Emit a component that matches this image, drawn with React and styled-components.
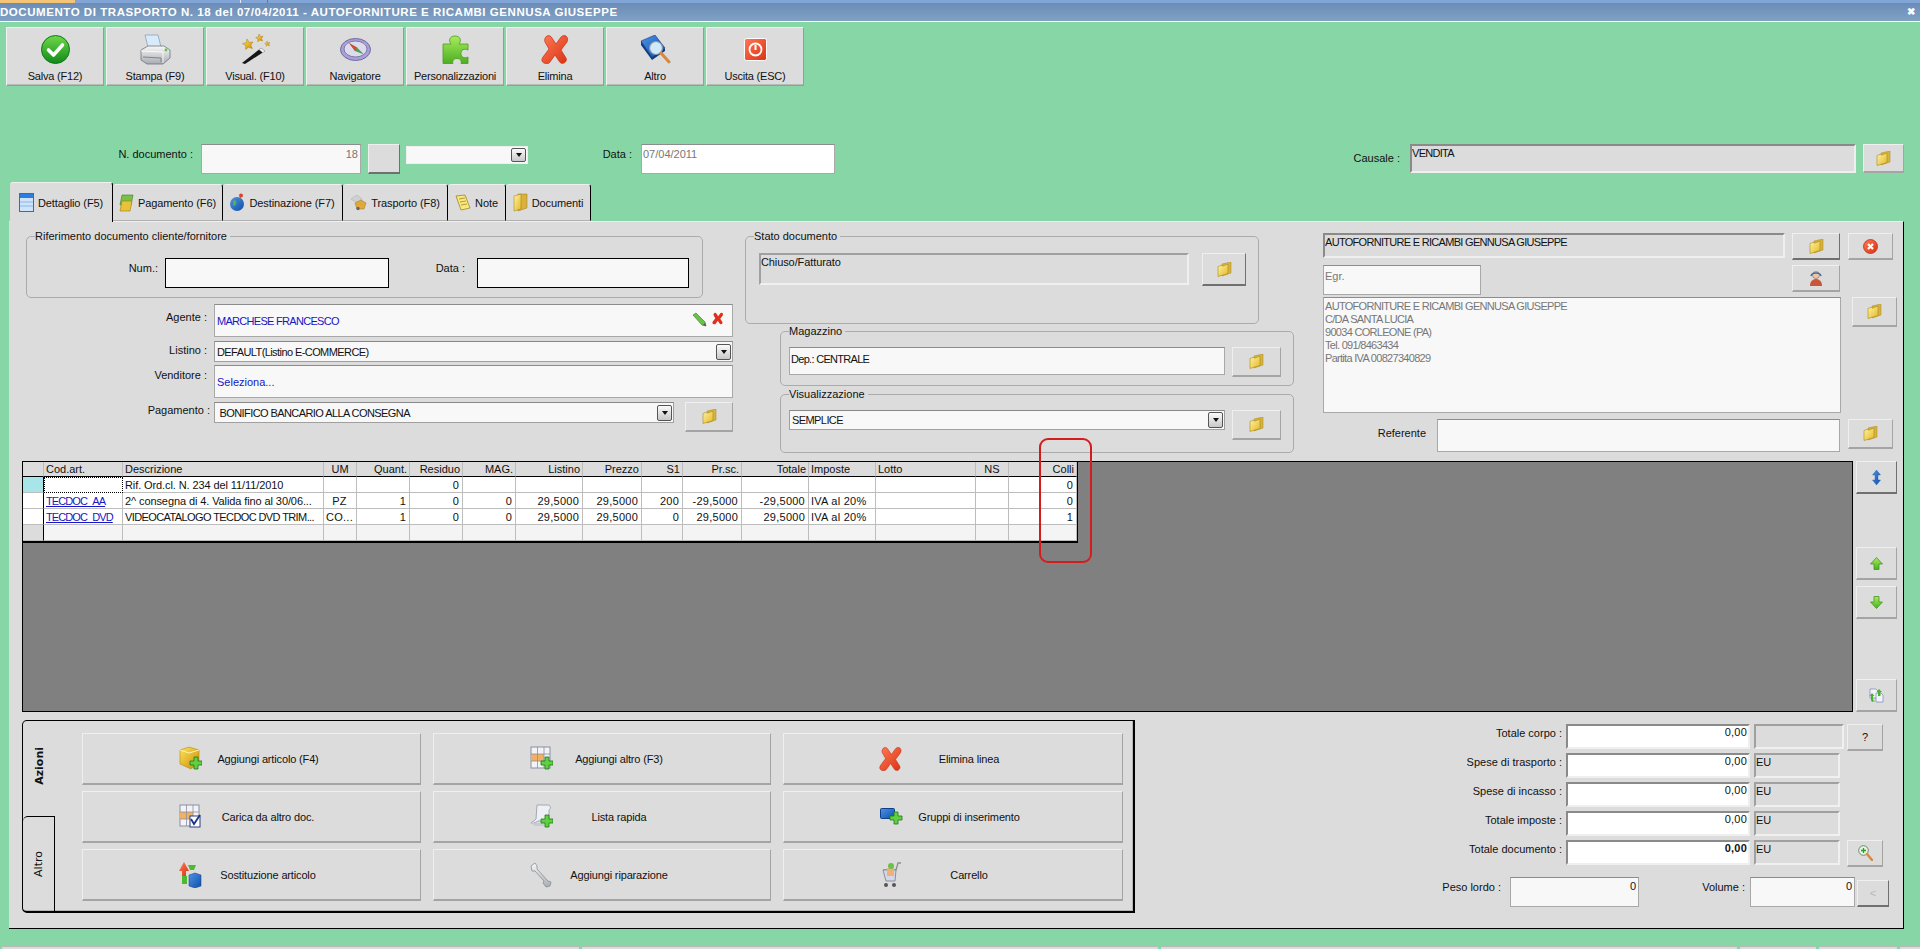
import React from "react"
import styled, { createGlobalStyle } from "styled-components"

const GlobalStyle = createGlobalStyle`
  html, body { margin: 0; padding: 0; background: #87d7a6; }
  * { box-sizing: border-box; }
  body { font-family: "Liberation Sans", Arial, sans-serif; font-size: 11px; color: #111; }
`

/* ---------- icons ---------- */
const Defs = () => (
  <HiddenSvg aria-hidden="true">
    <defs>
      <linearGradient id="gGreen" x1="0" y1="0" x2="0" y2="1"><stop offset="0" stopColor="#6fd84a" /><stop offset="1" stopColor="#0f8a18" /></linearGradient>
      <linearGradient id="gLime" x1="0" y1="0" x2="0" y2="1"><stop offset="0" stopColor="#a6ec5c" /><stop offset="1" stopColor="#4dae23" /></linearGradient>
      <linearGradient id="gRed" x1="0" y1="0" x2="1" y2="1"><stop offset="0" stopColor="#ff7a55" /><stop offset="1" stopColor="#d93213" /></linearGradient>
      <linearGradient id="gFolder" x1="0" y1="0" x2="1" y2="1"><stop offset="0" stopColor="#fff29c" /><stop offset="1" stopColor="#e2b92c" /></linearGradient>
      <linearGradient id="gBlue" x1="0" y1="0" x2="1" y2="1"><stop offset="0" stopColor="#4d93e6" /><stop offset="1" stopColor="#0f4fa8" /></linearGradient>
      <linearGradient id="gGold" x1="0" y1="0" x2="1" y2="1"><stop offset="0" stopColor="#ffe25a" /><stop offset="1" stopColor="#c88c08" /></linearGradient>
      <linearGradient id="gGray" x1="0" y1="0" x2="0" y2="1"><stop offset="0" stopColor="#f7f7f7" /><stop offset="1" stopColor="#a9adb2" /></linearGradient>
    </defs>
  </HiddenSvg>
)

const Check = () => (
  <svg width="29" height="29" viewBox="0 0 29 29">
    <circle cx="14.5" cy="14.5" r="14" fill="url(#gGreen)" stroke="#0d7a16" />
    <path d="M7.5 15l5 5 9-10" fill="none" stroke="#fff" strokeWidth="3.6" strokeLinecap="round" strokeLinejoin="round" />
  </svg>
)
const Printer = () => (
  <svg width="31" height="31" viewBox="0 0 31 31">
    <path d="M5 1l13 0 3 12-13 0z" fill="#d8ebfb" stroke="#7f9ab5" strokeWidth=".7" />
    <path d="M1 16l7-4h16l6 4v8l-7 6H7l-6-4z" fill="url(#gGray)" stroke="#6f7478" strokeWidth=".8" />
    <path d="M1 17l22 1v11" fill="none" stroke="#fff" strokeWidth=".8" />
    <path d="M3 23l18 1v4" fill="none" stroke="#6f7478" strokeWidth=".8" />
    <circle cx="26" cy="16" r="1.4" fill="#5ec04a" />
  </svg>
)
const Wand = () => (
  <svg width="31" height="31" viewBox="0 0 31 31">
    <path d="M2 29l19-15 4 3-20 13z" fill="#151515" />
    <path d="M19 15.500l2-1.600 4 3-2.200 1.800z" fill="#f2f2f2" stroke="#999" strokeWidth=".4" />
    <path d="M7 5l2.200 3.400 3.800-.4-2.200 3 1.500 3.600-3.700-1.400-3 2.300.2-3.800L2.500 9.600l3.800-1z" fill="url(#gGold)" stroke="#b07d0a" strokeWidth=".5" />
    <path d="M19 0l1.300 2.400 2.700-.2-1.500 2.200 1 2.600-2.600-1-2.100 1.700.2-2.700-2.300-1.400 2.600-.7z" fill="url(#gGold)" stroke="#b07d0a" strokeWidth=".5" />
    <path d="M27 7l.9 1.700 1.900-.2-1 1.500.7 1.800-1.800-.7-1.500 1.200.1-1.900-1.600-1 1.900-.5z" fill="url(#gGold)" stroke="#b07d0a" strokeWidth=".4" />
  </svg>
)
const Compass = () => (
  <svg width="31" height="23" viewBox="0 0 31 23">
    <ellipse cx="15.500" cy="11.500" rx="15" ry="11" fill="#a7a1d6" stroke="#6f6aa0" />
    <ellipse cx="15.500" cy="11" rx="11.500" ry="8" fill="#dcdcec" stroke="#7d78a8" />
    <path d="M9 5l8 4.500 7 7-9-3.500z" fill="#4f9e55" />
    <path d="M9 5l8 4.500-2 3.500z" fill="#d9472f" />
  </svg>
)
const Puzzle = () => (
  <svg width="27" height="29" viewBox="0 0 27 29">
    <path d="M1 9h8c-3-4-1-8 4-8s7 4 4 8h9v6c-4-2-7 0-7 3.500s3 5.500 7 3.500v6.500h-7c1-3-1-5-4-5s-5 2-4 5H1z" fill="url(#gLime)" stroke="#4e9a1e" strokeWidth=".8" />
  </svg>
)
const BigCross = ({ size = 29 }) => (
  <svg width={size} height={size} viewBox="0 0 29 29">
    <path d="M6 1c2-1 4 0 5 2l4 6 5-7c1-1 3-2 5-1 2 2 2 4 1 6l-6 8 5 8c1 2 0 4-2 5s-4 0-5-2l-4-6-5 7c-1 2-4 2-6 1s-3-3-1-6l6-8-4-7C3 5 4 2 6 1z" fill="url(#gRed)" stroke="#c82d12" strokeWidth=".7" />
  </svg>
)
const Book = () => (
  <svg width="31" height="29" viewBox="0 0 31 29">
    <path d="M1 6l14-6 10 13-13 9z" fill="url(#gBlue)" stroke="#0d3f8a" strokeWidth=".6" />
    <path d="M1 6l11 16 13-9v3l-13 9L1 10z" fill="#0c3d85" />
    <circle cx="16" cy="13" r="6.500" fill="#cfe9fb" stroke="#8795a3" strokeWidth="1.200" />
    <path d="M21 18l8 9" stroke="#d9883e" strokeWidth="3" strokeLinecap="round" />
  </svg>
)
const Power = () => (
  <svg width="23" height="23" viewBox="0 0 23 23">
    <rect x=".5" y=".5" width="22" height="22" rx="2" fill="url(#gRed)" stroke="#fff" />
    <circle cx="11.500" cy="11.500" r="6" fill="none" stroke="#fff" strokeWidth="1.800" />
    <path d="M11.500 7v5" stroke="#fff" strokeWidth="2" />
  </svg>
)
const Folder = () => (
  <svg width="15" height="15" viewBox="0 0 15 15">
    <path d="M5 2l9-2v11l-9 3z" fill="#d7b23c" stroke="#a88a20" strokeWidth=".5" />
    <path d="M1 4.500l3.500-1.300 1 1L11 2v9.500L1 14.500z" fill="url(#gFolder)" stroke="#a88a20" strokeWidth=".6" />
  </svg>
)
const CalcTab = () => (
  <svg width="15" height="19" viewBox="0 0 15 19">
    <rect x=".5" y=".5" width="14" height="18" fill="#cfe4fa" stroke="#2b6fc0" />
    <rect x="1" y="1" width="13" height="4" fill="#2b7de0" />
    <path d="M1 9h13M1 13h13" stroke="#8bb6e6" />
  </svg>
)
const MoneyTab = () => (
  <svg width="15" height="18" viewBox="0 0 15 18">
    <path d="M3 1h11l-2 10H1z" fill="#79c043" stroke="#3c7d1c" strokeWidth=".6" />
    <path d="M3 7h10l-2 10H1z" fill="#e9c23a" stroke="#9c7a14" strokeWidth=".6" />
  </svg>
)
const GlobeTab = () => (
  <svg width="15" height="19" viewBox="0 0 15 19">
    <circle cx="7" cy="11" r="7" fill="url(#gBlue)" />
    <path d="M3 8c3-2 4 1 3 3s-2 3-3 1z" fill="#54b04a" />
    <circle cx="11" cy="2.500" r="2" fill="#e0402a" />
    <path d="M10.500 4l-1 4" stroke="#777" />
  </svg>
)
const TruckTab = () => (
  <svg width="17" height="16" viewBox="0 0 17 16">
    <path d="M1 4l6-4 5 4-3 5z" fill="#d0d0d0" stroke="#aaa" strokeWidth=".5" />
    <path d="M5 8l6-3 5 3-2 6H7z" fill="#e3a83c" stroke="#9a7420" strokeWidth=".5" />
    <circle cx="8" cy="13.500" r="1.700" fill="#666" />
  </svg>
)
const NoteTab = () => (
  <svg width="16" height="17" viewBox="0 0 16 17">
    <path d="M1 2l9-1 5 13-9 2z" fill="#fbe77a" stroke="#8f7a1c" strokeWidth=".7" />
    <path d="M4 5l6-1M5 8l6-1M6 11l6-1" stroke="#8f7a1c" strokeWidth=".7" />
  </svg>
)
const DocsTab = () => (
  <svg width="15" height="19" viewBox="0 0 15 19">
    <path d="M5 1h9v14l-9 3z" fill="#d9b13c" stroke="#9a7a18" strokeWidth=".5" />
    <path d="M1 3l7-2v15l-7 2z" fill="url(#gFolder)" stroke="#9a7a18" strokeWidth=".5" />
  </svg>
)
const Pencil = () => (
  <svg width="16" height="15" viewBox="0 0 16 15">
    <path d="M1 3l3-2 9 9 1 4-4-1z" fill="#6cc14b" stroke="#3f8a24" strokeWidth=".7" />
    <path d="M11 13l3 1-1-3z" fill="#555" />
  </svg>
)
const SmallCross = () => (
  <svg width="12" height="13" viewBox="0 0 29 29">
    <path d="M6 1c2-1 4 0 5 2l4 6 5-7c1-1 3-2 5-1 2 2 2 4 1 6l-6 8 5 8c1 2 0 4-2 5s-4 0-5-2l-4-6-5 7c-1 2-4 2-6 1s-3-3-1-6l6-8-4-7C3 5 4 2 6 1z" fill="#e0301c" />
  </svg>
)
const RedCircle = () => (
  <svg width="15" height="15" viewBox="0 0 15 15">
    <circle cx="7.500" cy="7.500" r="7" fill="url(#gRed)" stroke="#b1220c" strokeWidth=".7" />
    <path d="M5 5l5 5M10 5l-5 5" stroke="#fff" strokeWidth="2.200" />
  </svg>
)
const Person = () => (
  <svg width="14" height="15" viewBox="0 0 14 15">
    <circle cx="7" cy="4" r="3.500" fill="#f2c7a0" stroke="#8c6a4a" strokeWidth=".6" />
    <path d="M2 5c1-4 9-4 10 0" fill="none" stroke="#3a6fb5" strokeWidth="1.400" />
    <path d="M1 15c0-5 3-7 6-7s6 2 6 7z" fill="#c8563a" />
  </svg>
)
const BlueUpDown = () => (
  <svg width="11" height="15" viewBox="0 0 11 15">
    <path d="M5.500 0l4 5H7v5h2.500l-4 5-4-5H4V5H1.500z" fill="url(#gBlue)" stroke="#1a5aa8" strokeWidth=".4" />
  </svg>
)
const ArrowUp = () => (
  <svg width="13" height="13" viewBox="0 0 13 13">
    <path d="M6.500.5L12.500 7H9v5.500H4V7H.5z" fill="url(#gLime)" stroke="#3c8a1a" strokeWidth=".7" />
  </svg>
)
const ArrowDown = () => (
  <svg width="13" height="13" viewBox="0 0 13 13">
    <path d="M4 .5h5V6h3.500L6.500 12.500.5 6H4z" fill="url(#gLime)" stroke="#3c8a1a" strokeWidth=".7" />
  </svg>
)
const Sync = () => (
  <svg width="15" height="15" viewBox="0 0 15 15">
    <path d="M1 1h6l2 2v7H1z" fill="#f2f4fa" stroke="#7285b3" strokeWidth=".7" />
    <path d="M7 5h5l2 2v7H7z" fill="#f2f4fa" stroke="#7285b3" strokeWidth=".7" />
    <path d="M3 5l2.500 3H4v4l2 1-3 1-1-2V8H.5z" fill="#46b52c" />
    <path d="M10 1l3 3h-1.500v4H9V4H7.500z" fill="#46b52c" />
  </svg>
)
const ZoomPlus = () => (
  <svg width="15" height="16" viewBox="0 0 15 16">
    <circle cx="5.500" cy="5.500" r="4.800" fill="#e6f5e2" stroke="#6a8a72" />
    <path d="M3 5.500h5M5.500 3v5" stroke="#2f9a2a" strokeWidth="1.300" />
    <path d="M9 9l5 6" stroke="#d9883e" strokeWidth="2.400" strokeLinecap="round" />
  </svg>
)
const PlusBadge = () => (
  <path d="M15 11h4v4h4v4h-4v4h-4v-4h-4v-4h4z" fill="#5fd040" stroke="#1d7a1a" strokeWidth=".8" />
)
const BoxPlus = () => (
  <svg width="23" height="25" viewBox="0 0 23 25">
    <path d="M1 4l9-3 10 3v13l-8 6-11-5z" fill="url(#gGold)" stroke="#a87a08" strokeWidth=".5" />
    <path d="M1 4l9 3 10-3" fill="none" stroke="#fff2a8" />
    <PlusBadge />
  </svg>
)
const GridCells = () => (
  <g>
    <rect x="1" y="1" width="19" height="21" fill="#f2f3f8" stroke="#8a8fa0" />
    <rect x="1" y="8" width="13" height="7" fill="#f2b060" />
    <path d="M1 8h19M1 15h19M7.500 1v21M14 1v21" stroke="#8a8fa0" strokeWidth=".8" />
  </g>
)
const TablePlus = () => (
  <svg width="23" height="25" viewBox="0 0 23 25"><GridCells /><PlusBadge /></svg>
)
const TableCheck = () => (
  <svg width="23" height="25" viewBox="0 0 23 25">
    <GridCells />
    <rect x="11" y="12" width="10" height="11" fill="#fff" stroke="#2c3e80" />
    <path d="M12 15l3 5 6-9" fill="none" stroke="#17368a" strokeWidth="1.800" />
  </svg>
)
const ScrollPlus = () => (
  <svg width="23" height="25" viewBox="0 0 23 25">
    <path d="M7 1h11c3 0 3 4 1 5v11H8c-3 2-7 3-7 2s4-2 5-4z" fill="#eef0f6" stroke="#a3a8b8" />
    <path d="M1 19h12l2 3H5z" fill="#c7cad6" />
    <PlusBadge />
  </svg>
)
const Swap = () => (
  <svg width="23" height="26" viewBox="0 0 23 26">
    <path d="M5 0l5 9H7v5H3V9H0z" fill="url(#gRed)" />
    <path d="M9 3h8l-2 5H11z" fill="#4dbb30" />
    <path d="M3 14h5v8H3z" fill="#4dbb30" />
    <path d="M10 13l6-2 6 2v11l-6 2-6-2z" fill="url(#gBlue)" stroke="#0d3f8a" strokeWidth=".5" />
  </svg>
)
const Wrench = () => (
  <svg width="23" height="26" viewBox="0 0 23 26">
    <path d="M1 4l4-3 2 3v3l11 12 3 1-1 4-4 1-3-4 1-2L5 9H2z" fill="url(#gGray)" stroke="#7f8388" strokeWidth=".7" />
  </svg>
)
const GroupPlus = () => (
  <svg width="23" height="17" viewBox="0 0 23 17">
    <rect x=".5" y=".5" width="14" height="10" rx="1" fill="url(#gBlue)" stroke="#0d3f8a" />
    <g transform="translate(-1 -7)"><PlusBadge /></g>
  </svg>
)
const Cart = () => (
  <svg width="21" height="26" viewBox="0 0 21 26">
    <path d="M2 8h13l2-7h3" fill="none" stroke="#8a8f96" strokeWidth="1.300" />
    <path d="M2 8h13l-1 11H5z" fill="#d3d7ea" stroke="#8a8f96" />
    <rect x="6" y="6" width="7" height="8" fill="#f0b078" />
    <circle cx="10" cy="4" r="3" fill="#6cc14b" />
    <circle cx="5" cy="23" r="2" fill="#555" />
    <circle cx="13" cy="23" r="2" fill="#555" />
  </svg>
)

/* ---------- data ---------- */
const toolbar = [
  { label: "Salva (F12)", icon: <Check /> },
  { label: "Stampa (F9)", icon: <Printer /> },
  { label: "Visual. (F10)", icon: <Wand /> },
  { label: "Navigatore", icon: <Compass /> },
  { label: "Personalizzazioni", icon: <Puzzle /> },
  { label: "Elimina", icon: <BigCross /> },
  { label: "Altro", icon: <Book /> },
  { label: "Uscita (ESC)", icon: <Power /> },
]

const tabs = [
  { label: "Dettaglio (F5)", icon: <CalcTab />, w: 103, active: true },
  { label: "Pagamento (F6)", icon: <MoneyTab />, w: 110 },
  { label: "Destinazione (F7)", icon: <GlobeTab />, w: 120 },
  { label: "Trasporto (F8)", icon: <TruckTab />, w: 105 },
  { label: "Note", icon: <NoteTab />, w: 58 },
  { label: "Documenti", icon: <DocsTab />, w: 85 },
]

const columns = [
  { w: 21 }, { w: 79, t: "Cod.art." }, { w: 201, t: "Descrizione" }, { w: 33, t: "UM", c: true },
  { w: 53, t: "Quant.", r: true }, { w: 53, t: "Residuo", r: true }, { w: 53, t: "MAG.", r: true },
  { w: 67, t: "Listino", r: true }, { w: 59, t: "Prezzo", r: true }, { w: 41, t: "S1", r: true },
  { w: 59, t: "Pr.sc.", r: true }, { w: 67, t: "Totale", r: true }, { w: 67, t: "Imposte" },
  { w: 100, t: "Lotto" }, { w: 33, t: "NS", c: true }, { w: 68, t: "Colli", r: true },
]

const rows = [
  ["", "Rif. Ord.cl. N. 234 del 11/11/2010", "", "", "0", "", "", "", "", "", "", "", "", "", "0"],
  ["TECDOC_AA", "2^ consegna di 4. Valida fino al 30/06...", "PZ", "1", "0", "0", "29,5000", "29,5000", "200", "-29,5000", "-29,5000", "IVA al 20%", "", "", "0"],
  ["TECDOC_DVD", "VIDEOCATALOGO TECDOC DVD TRIM...", "CO...", "1", "0", "0", "29,5000", "29,5000", "0", "29,5000", "29,5000", "IVA al 20%", "", "", "1"],
  ["", "", "", "", "", "", "", "", "", "", "", "", "", "", ""],
]

const actions = [
  { label: "Aggiungi articolo (F4)", icon: <BoxPlus /> },
  { label: "Aggiungi altro (F3)", icon: <TablePlus /> },
  { label: "Elimina linea", icon: <BigCross size={24} /> },
  { label: "Carica da altro doc.", icon: <TableCheck /> },
  { label: "Lista rapida", icon: <ScrollPlus /> },
  { label: "Gruppi di inserimento", icon: <GroupPlus /> },
  { label: "Sostituzione articolo", icon: <Swap /> },
  { label: "Aggiungi riparazione", icon: <Wrench /> },
  { label: "Carrello", icon: <Cart /> },
]

const totals = [
  { label: "Totale corpo :", unit: "", tail: "?" },
  { label: "Spese di trasporto :", unit: "EU" },
  { label: "Spese di incasso :", unit: "EU" },
  { label: "Totale imposte :", unit: "EU" },
  { label: "Totale documento :", unit: "EU", strong: true, tail: "zoom" },
]

const address = ["AUTOFORNITURE E RICAMBI GENNUSA GIUSEPPE", "C/DA SANTA LUCIA", "90034 CORLEONE (PA)", "Tel. 091/8463434", "Partita IVA 00827340829"]

/* ---------- page ---------- */
export default function App() {
  return (
    <Screen>
      <GlobalStyle />
      <Defs />
      <TopStrip><OrangeTab /><StripTab /></TopStrip>
      <TitleBar>
        <span>DOCUMENTO DI TRASPORTO N. 18 del 07/04/2011 - AUTOFORNITURE E RICAMBI GENNUSA GIUSEPPE</span>
        <CloseBox>✖</CloseBox>
      </TitleBar>

      <Toolbar>
        {toolbar.map(b => (
          <ToolButton key={b.label}>
            <ToolIcon>{b.icon}</ToolIcon>
            <span>{b.label}</span>
          </ToolButton>
        ))}
      </Toolbar>

      <DocRow>
        <DocLabel $w={74}>N. documento :</DocLabel>
        <Input $w={160} $h={30} $ml={8} $right $muted $pt={3}>18</Input>
        <Raised $w={32} $h={30} $ml={7} $deep />
        <Select $w={122} $ml={6} $plain $tall={18} />
        <DocLabel $w={30} $ml={74}>Data :</DocLabel>
        <Input $w={194} $h={30} $ml={9} $muted $white $pt={3}>07/04/2011</Input>
        <DocLabel $w={45} $ml={520} $drop>Causale :</DocLabel>
        <Sunken $w={446} $h={29} $ml={10} $tight>VENDITA</Sunken>
        <Raised $w={41} $h={29} $ml={7}><Folder /></Raised>
      </DocRow>

      <TabStrip>
        {tabs.map(t => (
          <Tab key={t.label} $w={t.w} $active={t.active}>
            {t.icon}
            <span>{t.label}</span>
          </Tab>
        ))}
      </TabStrip>

      <Panel>
        <TopZone>
          <LeftColumn>
            <Group $h={68}>
              <legend>Riferimento documento cliente/fornitore</legend>
              <RefRow>
                <DocLabel $w={32} $ml={91}>Num.:</DocLabel>
                <BlackInput $w={224} $ml={7} />
                <DocLabel $w={30} $ml={46}>Data :</DocLabel>
                <BlackInput $w={212} $ml={12} />
              </RefRow>
            </Group>
            <FormRow $mt={6}>
              <FormLabel $top={7}>Agente :</FormLabel>
              <LinkInput $h={33} $pad={10}>
                <span>MARCHESE FRANCESCO</span>
                <RowIcons><Pencil /><SmallCross /></RowIcons>
              </LinkInput>
            </FormRow>
            <FormRow $mt={4}>
              <FormLabel $top={3}>Listino :</FormLabel>
              <Select $tall={21} $tight>DEFAULT(Listino E-COMMERCE)</Select>
            </FormRow>
            <FormRow $mt={3}>
              <FormLabel $top={4}>Venditore :</FormLabel>
              <LinkInput $h={33} $pad={10} $plainText>Seleziona...</LinkInput>
            </FormRow>
            <FormRow $mt={4}>
              <FormLabel $top={2} $shift={3}>Pagamento :</FormLabel>
              <PayCell>
                <Select $w={460} $tall={21} $tight>&nbsp;BONIFICO BANCARIO ALLA CONSEGNA</Select>
                <Raised $w={48} $h={30} $ml={11}><Folder /></Raised>
              </PayCell>
            </FormRow>
          </LeftColumn>

          <MiddleColumn>
            <Group $h={94} $w={514}>
              <legend>Stato documento</legend>
              <GroupRow $ml={5} $mt={11}>
                <Sunken $w={430} $h={32} $soft>Chiuso/Fatturato</Sunken>
                <Raised $w={44} $h={33} $ml={13} $deep><Folder /></Raised>
              </GroupRow>
            </Group>
            <Group $h={61} $w={514} $offset={35} $mt={1}>
              <legend>Magazzino</legend>
              <GroupRow $ml={0} $mt={10}>
                <Input $w={436} $h={28} $pt={5} $tight>Dep.: CENTRALE</Input>
                <Raised $w={49} $h={30} $ml={7}><Folder /></Raised>
              </GroupRow>
            </Group>
            <Group $h={65} $w={514} $offset={35} $mt={2}>
              <legend>Visualizzazione</legend>
              <GroupRow $ml={0} $mt={10}>
                <Select $w={436} $tall={20} $tight>SEMPLICE</Select>
                <Raised $w={49} $h={30} $ml={7}><Folder /></Raised>
              </GroupRow>
            </Group>
          </MiddleColumn>

          <RightColumn>
            <ClientRow>
              <Sunken $w={462} $h={25} $tight>AUTOFORNITURE E RICAMBI GENNUSA GIUSEPPE</Sunken>
              <Raised $w={48} $h={27} $ml={7} $deep><Folder /></Raised>
              <Raised $w={45} $h={27} $ml={8}><RedCircle /></Raised>
            </ClientRow>
            <ClientRow $mt={5}>
              <Input $w={158} $h={30} $muted $pt={4}>Egr.</Input>
              <Raised $w={48} $h={27} $ml={311}><Person /></Raised>
            </ClientRow>
            <ClientRow $mt={2}>
              <Input $w={518} $h={116} $muted $pt={2} $tight>
                {address.map(line => <div key={line}>{line}</div>)}
              </Input>
              <Raised $w={45} $h={30} $ml={11}><Folder /></Raised>
            </ClientRow>
            <ClientRow $mt={6}>
              <DocLabel $w={103} $drop>Referente</DocLabel>
              <Input $w={403} $h={33} $ml={11} />
              <Raised $w={45} $h={30} $ml={8}><Folder /></Raised>
            </ClientRow>
          </RightColumn>
        </TopZone>

        <GridZone>
          <GridArea>
            <Table>
              <colgroup>
                {columns.map((c, i) => <col key={i} width={c.w} />)}
              </colgroup>
              <thead>
                <tr>
                  {columns.map((c, i) => <Th key={i} $r={c.r} $c={c.c}>{c.t}</Th>)}
                </tr>
              </thead>
              <tbody>
                {rows.map((row, ri) => (
                  <Tr key={ri} $blank={ri === 3}>
                    <RowHead $tone={ri === 0 ? "#a8e5e9" : ri === 3 ? "#dcdcdc" : "#fff"} />
                    {row.map((v, ci) => {
                      const col = columns[ci + 1]
                      if (ci === 0 && ri === 0) return <FocusCell key={ci} />
                      if (ci === 0 && v) return <Td key={ci}><CodeLink>{v}</CodeLink></Td>
                      return <Td key={ci} $r={col.r} $c={col.c} $desc={ci === 1} $caps={ci === 1 && ri === 2}>{v}</Td>
                    })}
                  </Tr>
                ))}
              </tbody>
            </Table>
            <Highlight />
          </GridArea>
          <SideButtons>
            <Raised $w={41} $h={33} $deep><BlueUpDown /></Raised>
            <Raised $w={41} $h={33} $mt={53}><ArrowUp /></Raised>
            <Raised $w={41} $h={33} $mt={6}><ArrowDown /></Raised>
            <SideSpacer />
            <Raised $w={41} $h={33}><Sync /></Raised>
          </SideButtons>
        </GridZone>

        <BottomZone>
          <ActionBox>
            <SideTabs>
              <SideTab $active $h={96}><span>Azioni</span></SideTab>
              <SideTab $h={97}><span>Altro</span></SideTab>
            </SideTabs>
            <ActionGrid>
              {actions.map(a => (
                <ActionButton key={a.label}>
                  <ActionIcon>{a.icon}</ActionIcon>
                  <ActionLabel>{a.label}</ActionLabel>
                </ActionButton>
              ))}
            </ActionGrid>
          </ActionBox>

          <Totals>
            {totals.map(t => (
              <TotalRow key={t.label}>
                <TotalLabel>{t.label}</TotalLabel>
                <TotalValue $strong={t.strong}>0,00</TotalValue>
                <Sunken $w={t.tail === "?" ? 90 : 86} $h={25} $ml={4} $soft>{t.unit}</Sunken>
                {t.tail === "?" && <Raised $w={36} $h={27} $ml={3}>?</Raised>}
                {t.tail === "zoom" && <Raised $w={36} $h={27} $ml={7}><ZoomPlus /></Raised>}
              </TotalRow>
            ))}
            <WeightRow>
              <DocLabel $w={57} $ml={44}>Peso lordo :</DocLabel>
              <Input $w={129} $h={30} $ml={9} $right $pt={2}>0</Input>
              <DocLabel $w={41} $ml={65}>Volume :</DocLabel>
              <Input $w={105} $h={30} $ml={5} $right $pt={2}>0</Input>
              <Raised $w={32} $h={27} $ml={2} $mt={3} $deep $faint>&lt;</Raised>
            </WeightRow>
          </Totals>
        </BottomZone>
      </Panel>

      <StatusBar>
        <StatusCell $w={577} /><StatusCell $w={576} /><StatusCell $w={576} /><StatusCell $w={76} /><StatusCell $w={78} /><StatusCell $w={1} $grow />
      </StatusBar>
    </Screen>
  )
}

/* ---------- shell ---------- */
const Screen = styled.div`
  width: 1920px;
  height: 949px;
  overflow: hidden;
  background: #87d7a6;
  display: flex;
  flex-direction: column;
`
const HiddenSvg = styled.svg`
  width: 0;
  height: 0;
  flex: none;
`
const TopStrip = styled.div`
  height: 3px;
  background: #82a5d8;
  display: flex;
  flex: none;
`
const OrangeTab = styled.div`
  width: 75px;
  background: #f4c476;
`
const StripTab = styled.div`
  width: 28px;
  margin-left: 165px;
  border-left: 1px solid #dfe8f5;
  border-right: 1px solid #5a78a8;
`
const TitleBar = styled.div`
  height: 19px;
  flex: none;
  background: linear-gradient(#6a8cb6, #81a1c5);
  border-bottom: 1px solid #fff;
  color: #fff;
  font-size: 11.5px;
  font-weight: 700;
  letter-spacing: .55px;
  line-height: 18px;
  white-space: nowrap;
  display: flex;
  justify-content: space-between;
  padding-right: 4px;
`
const CloseBox = styled.span`
  font-size: 10px;
  letter-spacing: 0;
  width: 11px;
  text-align: center;
`
const Toolbar = styled.div`
  display: flex;
  gap: 2px;
  padding: 5px 0 0 6px;
  flex: none;
`
const ToolButton = styled.div`
  width: 98px;
  height: 59px;
  background: #dcdcdc;
  border: 1px solid;
  border-color: #f2f2f2 #9a9a9a #9a9a9a #f2f2f2;
  box-shadow: inset 0 -1px #b9b9b9;
  display: flex;
  flex-direction: column;
  align-items: center;
  padding-top: 5px;
  font-size: 11px;
  letter-spacing: -.2px;
  white-space: nowrap;
`
const ToolIcon = styled.div`
  height: 33px;
  display: flex;
  align-items: center;
  justify-content: center;
  margin-bottom: 4px;
`
const DocRow = styled.div`
  display: flex;
  align-items: flex-start;
  margin-top: 58px;
  height: 30px;
  padding-left: 119px;
  flex: none;
`
const DocLabel = styled.div`
  width: ${p => p.$w}px;
  margin-left: ${p => p.$ml || 0}px;
  margin-top: ${p => (p.$drop ? 8 : 4)}px;
  text-align: right;
  white-space: nowrap;
  flex: none;
  display: flex;
  justify-content: flex-end;
`

/* ---------- field kinds ---------- */
const Input = styled.div`
  width: ${p => (p.$w ? `${p.$w}px` : "100%")};
  height: ${p => p.$h}px;
  margin-left: ${p => p.$ml || 0}px;
  flex: none;
  background: ${p => (p.$white ? "#fff" : "#f8f8f8")};
  border: 1px solid #a8a8a8;
  border-top-color: #8c8c8c;
  padding: ${p => p.$pt || 1}px 2px 0 1px;
  color: ${p => (p.$muted ? "#777" : "#111")};
  text-align: ${p => (p.$right ? "right" : "left")};
  letter-spacing: ${p => (p.$tight ? "-.7px" : "0")};
  line-height: 13px;
  white-space: nowrap;
  overflow: hidden;
`
const BlackInput = styled.div`
  width: ${p => p.$w}px;
  height: 30px;
  margin-left: ${p => p.$ml || 0}px;
  background: #f8f8f8;
  border: 1px solid #000;
  flex: none;
`
const Sunken = styled.div`
  width: ${p => p.$w}px;
  height: ${p => p.$h}px;
  margin-left: ${p => p.$ml || 0}px;
  flex: none;
  background: #dcdcdc;
  border: 2px solid;
  border-color: ${p => (p.$soft ? "#a0a0a0 #f0f0f0 #f0f0f0 #a0a0a0" : "#8a8a8a #efefef #efefef #8a8a8a")};
  padding-top: 1px;
  letter-spacing: ${p => (p.$tight ? "-.7px" : "-.1px")};
  line-height: 13px;
  white-space: nowrap;
  overflow: hidden;
`
const Raised = styled.div`
  width: ${p => p.$w}px;
  height: ${p => p.$h}px;
  margin-left: ${p => p.$ml || 0}px;
  margin-top: ${p => p.$mt || 0}px;
  flex: none;
  background: #dcdcdc;
  border: 1px solid;
  border-color: #efefef #a4a4a4 #a4a4a4 #efefef;
  border-bottom: ${p => (p.$deep ? "2px solid #707070" : "2px solid #a4a4a4")};
  border-right-color: ${p => (p.$deep ? "#707070" : "#a4a4a4")};
  display: flex;
  align-items: center;
  justify-content: center;
  color: ${p => (p.$faint ? "#b8b8b8" : "#111")};
`
const SelectBox = styled.div`
  width: ${p => (p.$w ? `${p.$w}px` : "100%")};
  height: ${p => p.$tall}px;
  margin-left: ${p => p.$ml || 0}px;
  margin-top: ${p => (p.$plain ? 2 : 0)}px;
  flex: none;
  background: #f8f8f8;
  border: 1px solid ${p => (p.$plain ? "#efefef" : "#a0a0a0")};
  border-top-color: ${p => (p.$plain ? "#efefef" : "#888")};
  display: flex;
  align-items: center;
  justify-content: space-between;
  padding-left: 2px;
  letter-spacing: ${p => (p.$tight ? "-.58px" : "0")};
  white-space: nowrap;
`
const DropButton = styled.span`
  width: 15px;
  height: calc(100% - 2px);
  margin-right: 1px;
  max-height: 16px;
  border: 1px solid #555;
  border-radius: 2px;
  background: linear-gradient(#fafafa, #c8c8c8);
  display: flex;
  align-items: center;
  justify-content: center;
  &::after {
    content: "";
    border: 3px solid transparent;
    border-top: 4px solid #111;
    border-bottom: 0;
  }
`
const Select = ({ children, ...rest }) => (
  <SelectBox {...rest}>
    <span>{children}</span>
    <DropButton />
  </SelectBox>
)

/* ---------- tabs ---------- */
const TabStrip = styled.div`
  display: flex;
  align-items: flex-end;
  margin: 8px 0 0 10px;
  height: 39px;
  flex: none;
  position: relative;
  z-index: 1;
`
const Tab = styled.div`
  width: ${p => p.$w}px;
  height: ${p => (p.$active ? 40 : 37)}px;
  margin-bottom: ${p => (p.$active ? -1 : 0)}px;
  background: #dcdcdc;
  border-top: 1px solid #efefef;
  border-right: 1px solid #000;
  border-bottom: ${p => (p.$active ? "none" : "1px solid #b0b0b0")};
  border-top-left-radius: 3px;
  border-top-right-radius: 3px;
  display: flex;
  align-items: center;
  justify-content: center;
  gap: 4px;
  white-space: nowrap;
  letter-spacing: -.1px;
`

/* ---------- main panel ---------- */
const Panel = styled.div`
  width: 1895px;
  height: 708px;
  margin-left: 9px;
  flex: none;
  background: #dcdcdc;
  border-top: 1px solid #efefef;
  border-right: 1px solid #000;
  border-bottom: 1px solid #000;
  padding: 11px 0 0 13px;
  display: flex;
  flex-direction: column;
`
const TopZone = styled.div`
  height: 220px;
  margin-left: 4px;
  display: grid;
  grid-template-columns: 707px 549px 570px;
  column-gap: 12px;
  flex: none;
  & > :last-child { margin-left: 17px; }
`
const LeftColumn = styled.div`
  margin-top: -3px;
`
const MiddleColumn = styled.div`
  margin-top: -3px;
`
const RightColumn = styled.div``
const Group = styled.fieldset`
  width: ${p => (p.$w ? `${p.$w}px` : "677px")};
  height: ${p => p.$h}px;
  margin: ${p => p.$mt || 0}px 0 0 ${p => p.$offset || 0}px;
  padding: 0 8px;
  border: 1px solid #ababab;
  border-radius: 5px;
  min-width: 0;
  legend {
    margin-left: 0;
    padding: 0 3px 0 0;
    line-height: 12px;
  }
`
const RefRow = styled.div`
  display: flex;
  align-items: flex-start;
  margin-top: 16px;
`
const GroupRow = styled.div`
  display: flex;
  align-items: flex-start;
  margin: ${p => p.$mt}px 0 0 ${p => p.$ml}px;
`
const FormRow = styled.div`
  display: grid;
  grid-template-columns: 181px 519px;
  column-gap: 7px;
  margin-top: ${p => p.$mt}px;
`
const FormLabel = styled.div`
  text-align: right;
  padding-top: ${p => p.$top}px;
  margin-right: ${p => -(p.$shift || 0)}px;
  white-space: nowrap;
`
const LinkInput = styled(Input)`
  color: #1616c4;
  padding-top: ${p => p.$pad}px;
  padding-left: 2px;
  letter-spacing: ${p => (p.$plainText ? "0" : "-.7px")};
  display: flex;
  align-items: flex-start;
  justify-content: space-between;
`
const RowIcons = styled.span`
  display: flex;
  gap: 4px;
  margin-top: -3px;
  margin-right: 6px;
`
const PayCell = styled.div`
  display: flex;
  align-items: flex-start;
`
const ClientRow = styled.div`
  display: flex;
  align-items: flex-start;
  margin-top: ${p => p.$mt || 0}px;
`

/* ---------- grid ---------- */
const GridZone = styled.div`
  display: flex;
  margin-top: 8px;
  height: 251px;
  flex: none;
`
const GridArea = styled.div`
  width: 1831px;
  height: 251px;
  background: #808080;
  border: 1px solid #000;
  position: relative;
  flex: none;
`
const Table = styled.table`
  width: 1054px;
  table-layout: fixed;
  border-collapse: separate;
  border-spacing: 0;
  font-size: 11px;
  border-right: 1px solid #000;
  border-bottom: 2px solid #000;
  background: #fff;
`
const Th = styled.th`
  height: 15px;
  padding: 0 2px;
  font-weight: 400;
  background: #dcdcdc;
  border-right: 1px solid #bdbdbd;
  border-bottom: 1px solid #000;
  text-align: ${p => (p.$r ? "right" : p.$c ? "center" : "left")};
  white-space: nowrap;
  overflow: hidden;
  line-height: 14px;
`
const Tr = styled.tr`
  background: ${p => (p.$blank ? "#f4f4f4" : "#fff")};
`
const Td = styled.td`
  height: 16px;
  padding: 1px 3px 0 2px;
  border-right: 1px solid #bdbdbd;
  border-bottom: 1px solid #bdbdbd;
  text-align: ${p => (p.$r ? "right" : p.$c ? "center" : "left")};
  letter-spacing: ${p => (p.$caps ? "-.6px" : p.$desc ? "-.1px" : ".25px")};
  white-space: nowrap;
  overflow: hidden;
  line-height: 14px;
`
const RowHead = styled.td`
  height: 16px;
  padding: 0;
  background: ${p => p.$tone};
  border-right: 1px solid #000;
  border-bottom: 1px solid #bdbdbd;
`
const FocusCell = styled.td`
  border: 1px dotted #000;
  height: 16px;
  padding: 0;
`
const CodeLink = styled.span`
  color: #1616c4;
  text-decoration: underline;
  letter-spacing: -.9px;
`
const Highlight = styled.div`
  position: absolute;
  left: 1016px;
  top: -24px;
  width: 53px;
  height: 125px;
  border: 2px solid #d41c1c;
  border-radius: 9px;
  pointer-events: none;
`
const SideButtons = styled.div`
  display: flex;
  flex-direction: column;
  margin-left: 3px;
  width: 41px;
`
const SideSpacer = styled.div`
  flex: 1;
`

/* ---------- bottom ---------- */
const BottomZone = styled.div`
  display: flex;
  margin-top: 8px;
  flex: none;
`
const ActionBox = styled.div`
  width: 1113px;
  height: 193px;
  display: flex;
  border: 1px solid #000;
  border-right-width: 2px;
  border-bottom-width: 2px;
  border-radius: 5px 0 0 5px;
  box-shadow: inset -1px -1px #b4b4b4;
  flex: none;
`
const SideTabs = styled.div`
  width: 32px;
  flex: none;
  display: flex;
  flex-direction: column;
`
const SideTab = styled.div`
  height: ${p => p.$h}px;
  display: flex;
  align-items: center;
  justify-content: center;
  border-right: ${p => (p.$active ? "none" : "1px solid #000")};
  border-top: ${p => (p.$active ? "none" : "1px solid #000")};
  border-radius: 5px 0 0 5px;
  span {
    writing-mode: vertical-rl;
    transform: rotate(180deg);
    font-family: "DejaVu Sans", sans-serif;
    font-size: 11px;
    font-weight: ${p => (p.$active ? 700 : 400)};
    margin-bottom: ${p => (p.$active ? 4 : 0)}px;
  }
`
const ActionGrid = styled.div`
  display: grid;
  grid-template-columns: 339px 338px 340px;
  grid-template-rows: 52px 52px 52px;
  column-gap: 12px;
  row-gap: 6px;
  margin: 12px 0 0 27px;
`
const ActionButton = styled.div`
  background: #dcdcdc;
  border: 1px solid;
  border-color: #efefef #a4a4a4 #a4a4a4 #efefef;
  border-bottom-width: 2px;
  display: grid;
  grid-template-columns: 95px 24px 132px 1fr;
  align-items: center;
  letter-spacing: -.15px;
`
const ActionIcon = styled.div`
  grid-column: 2;
  display: flex;
  justify-content: center;
`
const ActionLabel = styled.div`
  grid-column: 3;
  text-align: center;
  white-space: nowrap;
`
const Totals = styled.div`
  margin: 4px 0 0 265px;
`
const TotalRow = styled.div`
  display: flex;
  align-items: flex-start;
  height: 25px;
  margin-bottom: 4px;
`
const TotalLabel = styled.div`
  width: 162px;
  margin-right: 4px;
  text-align: right;
  padding-top: 3px;
  white-space: nowrap;
`
const TotalValue = styled.div`
  width: 184px;
  height: 25px;
  background: #fff;
  border: 2px solid;
  border-color: #8a8a8a #efefef #efefef #8a8a8a;
  text-align: right;
  padding-right: 1px;
  line-height: 13px;
  letter-spacing: .2px;
  font-weight: ${p => (p.$strong ? 700 : 400)};
`
const WeightRow = styled.div`
  display: flex;
  align-items: flex-start;
  margin-top: 12px;
`
const StatusBar = styled.div`
  display: flex;
  gap: 3px;
  margin-top: 17px;
  height: 3px;
  flex: none;
  padding-left: 2px;
`
const StatusCell = styled.div`
  width: ${p => p.$w}px;
  flex-grow: ${p => (p.$grow ? 1 : 0)};
  background: #dcdcdc;
  border-top: 1px solid #b8b8b8;
`
